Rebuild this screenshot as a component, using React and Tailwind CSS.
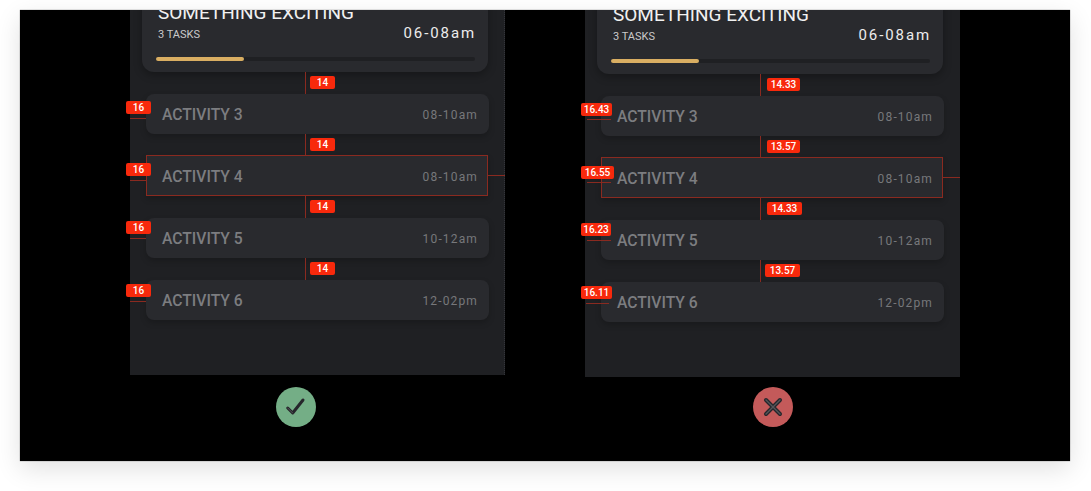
import React from "react";

const panels = [
  {
    wrapClass: "ml-[110px]",
    panelClass: "h-[365px] border-r border-dotted border-[#34353a]",
    cardClass: "-mt-[30px] h-[92px]",
    actionClass: "mt-[12px] ml-[146px] bg-[#74ae86]",
    action: "check",
    first: true,
    rows: [
      { name: "ACTIVITY 3", time: "08-10am", rowClass: "mt-[22px] h-10", side: "16", sideClass: "w-[25px] -left-[20px] top-[7px]", lineClass: "w-[16px] -left-[16px] top-[24px]" },
      { name: "ACTIVITY 4", time: "08-10am", rowClass: "mt-[21px] h-[41px]", hit: true, side: "16", sideClass: "w-[25px] -left-[21px] top-[7px]", lineClass: "w-[16px] -left-[17px] top-[24px]", gap: "14", gapClass: "w-[25px] left-[163px] -top-[18px]", gapLine: "left-[158px]" },
      { name: "ACTIVITY 5", time: "10-12am", rowClass: "mt-[22px] h-10", side: "16", sideClass: "w-[25px] -left-[20px] top-[3px]", lineClass: "w-[16px] -left-[16px] top-[20px]", gap: "14", gapClass: "w-[25px] left-[164px] -top-[18px]", gapLine: "left-[159px]" },
      { name: "ACTIVITY 6", time: "12-02pm", rowClass: "mt-[22px] h-10", side: "16", sideClass: "w-[25px] -left-[20px] top-[4px]", lineClass: "w-[16px] -left-[16px] top-[21px]", gap: "14", gapClass: "w-[25px] left-[164px] -top-[18px]", gapLine: "left-[159px]" },
    ],
  },
  {
    wrapClass: "ml-[80px]",
    panelClass: "h-[367px]",
    cardClass: "-mt-[28px] h-[92px]",
    actionClass: "mt-[10px] ml-[168px] bg-[#c45a5a]",
    action: "cross",
    rows: [
      { name: "ACTIVITY 3", time: "08-10am", rowClass: "mt-[22px] h-10", side: "16.43", sideClass: "w-[31px] -left-[20px] top-[7px]", lineClass: "w-[24px] -left-[14px] top-[23px]", gap: "14.33", gapClass: "w-[33px] left-[166px] -top-[18px]", gapLine: "left-[159px]" },
      { name: "ACTIVITY 4", time: "08-10am", rowClass: "mt-[21px] h-[41px]", hit: true, side: "16.55", sideClass: "w-[33px] -left-[21px] top-[8px]", lineClass: "w-[24px] -left-[15px] top-[24px]", gap: "13.57", gapClass: "w-[33px] left-[165px] -top-[18px]", gapLine: "left-[158px]" },
      { name: "ACTIVITY 5", time: "10-12am", rowClass: "mt-[22px] h-10", side: "16.23", sideClass: "w-[30px] -left-[20px] top-[3px]", lineClass: "w-[24px] -left-[14px] top-[20px]", gap: "14.33", gapClass: "w-[35px] left-[166px] -top-[18px]", gapLine: "left-[159px]" },
      { name: "ACTIVITY 6", time: "12-02pm", rowClass: "mt-[22px] h-10", side: "16.11", sideClass: "w-[31px] -left-[20px] top-[4px]", lineClass: "w-[23px] -left-[15px] top-[21px]", gap: "13.57", gapClass: "w-[35px] left-[164px] -top-[18px]", gapLine: "left-[159px]" },
    ],
  },
];

function Badge({ className, children }) {
  return (
    <span className={`absolute z-10 flex h-[13px] items-center justify-center rounded-[2px] bg-[#f8290c] text-[10px] leading-none font-medium text-white ${className}`}>
      {children}
    </span>
  );
}

function Row({ row }) {
  return (
    <div
      className={`relative ml-[16px] flex items-center justify-between pt-[2px] bg-[#292a2e] shadow-[0_3px_6px_rgba(0,0,0,0.2)] ${
        row.hit ? "w-[342px] border border-[#8a2a20] pr-[9px] pl-[15px]" : "w-[343px] rounded-lg pr-[11px] pl-[16px]"
      } ${row.rowClass}`}
    >
      <span className="text-[15.7px] font-medium text-[#7c7d80]">{row.name}</span>
      <span className="text-[12px] tracking-[1.15px] text-[#77787b]">{row.time}</span>

      <Badge className={row.sideClass}>{row.side}</Badge>
      <span className={`absolute h-px bg-[#8a2a20] ${row.lineClass}`} />
      {row.hit && <span className="absolute top-[19px] -right-[18px] h-px w-[17px] bg-[#8a2a20]" />}
      {row.gap && (
        <>
          <Badge className={row.gapClass}>{row.gap}</Badge>
          <span className={`absolute -top-[22px] h-[22px] w-px bg-[#8a2a20] ${row.gapLine}`} />
        </>
      )}
    </div>
  );
}

function Card({ className }) {
  return (
    <div className={`relative ml-[12px] w-[346px] rounded-xl bg-[#292a2e] px-[16px] pt-[21px] shadow-[0_3px_8px_rgba(0,0,0,0.3)] ${className}`}>
      <div className="text-[19px] leading-6 text-[#f1f1f1]">SOMETHING EXCITING</div>
      <div className="-mt-[1px] -mr-[4px] flex items-center justify-between">
        <span className="text-[11px] text-[#c9c9ca]">3 TASKS</span>
        <span className="-translate-y-[2px] text-[15px] tracking-[1.9px] text-[#ececec]">06-08am</span>
      </div>
      <div className="absolute right-[13px] bottom-[11px] left-[14px] h-1 rounded-full bg-[#1f2023]">
        <div className="h-1 w-[88px] rounded-full bg-[#d9ae62]" />
      </div>
    </div>
  );
}

function ActionIcon({ type }) {
  return (
    <svg width="24" height="24" viewBox="0 0 24 24" fill="none" strokeLinecap="round" strokeLinejoin="round">
      {type === "check" ? (
        <>
          <path d="M3.7 13 8.7 18 19 5" stroke="#26262b" strokeWidth="3" />
          <path d="M3.7 13 8.7 18" stroke="#55565a" strokeWidth="1" />
        </>
      ) : (
        <>
          <path d="M5 5 19 19M19 5 5 19" stroke="#26262b" strokeWidth="4" />
          <path d="M5 5 19 19M19 5 5 19" stroke="#55565a" strokeWidth="1.4" />
        </>
      )}
    </svg>
  );
}

function Panel({ data }) {
  return (
    <div className={`w-[375px] shrink-0 ${data.wrapClass}`}>
      <div className={`relative flow-root w-[375px] bg-[#1f2023] ${data.panelClass}`}>
        <Card className={data.cardClass} />
        {data.first && (
          <div className="relative h-0">
            <Badge className="top-[4px] left-[180px] w-[25px]">14</Badge>
            <span className="absolute top-0 left-[175px] h-[22px] w-px bg-[#8a2a20]" />
          </div>
        )}
        {data.rows.map((row) => (
          <Row key={row.name} row={row} />
        ))}
      </div>
      <div className={`flex h-10 w-10 items-center justify-center rounded-full ${data.actionClass}`}>
        <ActionIcon type={data.action} />
      </div>
    </div>
  );
}

export default function App() {
  return (
    <div className="h-[491px] w-[1091px] overflow-hidden bg-white pt-[10px] pl-[20px] font-['Roboto',sans-serif]">
      <div className="flex h-[451px] w-[1050px] overflow-hidden bg-black shadow-[0_0_1px_rgba(0,0,0,0.6),0_8px_24px_rgba(0,0,0,0.12)]">
        {panels.map((p) => (
          <Panel key={p.action} data={p} />
        ))}
      </div>
    </div>
  );
}
